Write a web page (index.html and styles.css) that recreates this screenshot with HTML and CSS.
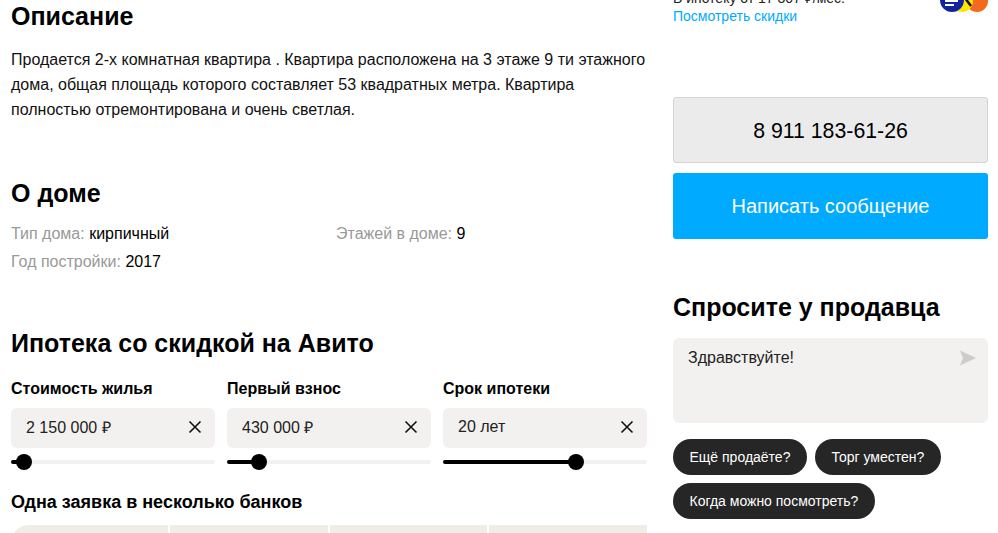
FILE: index.html
```html
<!DOCTYPE html>
<html lang="ru">
<head>
  <meta charset="UTF-8">
  <title>Квартира</title>
  <link rel="stylesheet" href="styles.css">
</head>
<body>
  <div class="page">
    <!-- Left column -->
    <div class="main">
      <h2 class="title-first">Описание</h2>
      <p class="descr">Продается 2-х комнатная квартира . Квартира расположена на 3 этаже 9 ти этажного дома, общая площадь которого составляет 53 квадратных метра. Квартира полностью отремонтирована и очень светлая.</p>

      <h2 class="title-house">О доме</h2>
      <ul class="params">
        <li><span>Тип дома:</span> кирпичный</li>
        <li><span>Этажей в доме:</span> 9</li>
        <li><span>Год постройки:</span> 2017</li>
      </ul>

      <h2 class="title-mortgage">Ипотека со скидкой на Авито</h2>
      <div class="calc">
        <div class="field">
          <label>Стоимость жилья</label>
          <div class="input"><span>2 150 000 ₽</span>
            <svg class="clear" width="14" height="14" viewBox="0 0 14 14"><path d="M1.5 1.5l11 11M12.5 1.5l-11 11"/></svg>
          </div>
          <div class="track"><div class="fill" style="width: 13px"></div><div class="knob"></div></div>
        </div>
        <div class="field">
          <label>Первый взнос</label>
          <div class="input"><span>430 000 ₽</span>
            <svg class="clear" width="14" height="14" viewBox="0 0 14 14"><path d="M1.5 1.5l11 11M12.5 1.5l-11 11"/></svg>
          </div>
          <div class="track"><div class="fill" style="width: 32px"></div><div class="knob"></div></div>
        </div>
        <div class="field">
          <label>Срок ипотеки</label>
          <div class="input"><span>20 лет</span>
            <svg class="clear" width="14" height="14" viewBox="0 0 14 14"><path d="M1.5 1.5l11 11M12.5 1.5l-11 11"/></svg>
          </div>
          <div class="track"><div class="fill" style="width: 133px"></div><div class="knob"></div></div>
        </div>
      </div>

      <h3 class="banks-title">Одна заявка в несколько банков</h3>
      <div class="banks">
        <div class="bank"></div>
        <div class="bank"></div>
        <div class="bank"></div>
        <div class="bank"></div>
      </div>
    </div>

    <!-- Right column -->
    <div class="side">
      <div class="promo">
        <div class="promo-text">
          <div>В ипотеку от 17 307 ₽/мес.</div>
          <a href="#">Посмотреть скидки</a>
        </div>
        <svg class="promo-logo" width="48" height="26" viewBox="0 0 48 26">
          <circle cx="37" cy="13" r="11" fill="#f26a1b"/>
          <circle cx="22" cy="13" r="11" fill="#ffe600"/>
          <path d="M25 10l6 8" stroke="#111" stroke-width="2.5"/>
          <circle cx="12" cy="12" r="12" fill="#12239e"/>
          <path d="M5 9h13M5 13h13M5 17h9" stroke="#fff" stroke-width="2"/>
        </svg>
      </div>
      <a class="btn btn-phone" href="#">8 911 183-61-26</a>
      <a class="btn btn-write" href="#">Написать сообщение</a>

      <h2 class="title-ask">Спросите у продавца</h2>
      <div class="msg">
        <span>Здравствуйте!</span>
        <svg class="send" width="16" height="16" viewBox="0 0 16 15"><path d="M0 0l16 7.5L0 15l3-7.5z"/></svg>
      </div>
      <div class="chips">
        <a class="chip" href="#">Ещё продаёте?</a>
        <a class="chip" href="#">Торг уместен?</a>
        <a class="chip" href="#">Когда можно посмотреть?</a>
      </div>
    </div>
  </div>
</body>
</html>
```

FILE: styles.css
```css
html, body { margin: 0; padding: 0; height: 533px; overflow: hidden; background: #fff; }
body { font-family: "Liberation Sans", Arial, sans-serif; color: #000; font-size: 16px; }
a { text-decoration: none; }
h2, h3, p, ul { margin: 0; padding: 0; }

.page { display: flex; gap: 26px; height: 542px; padding-left: 11px; margin-top: -9px; overflow: hidden; }
.main { width: 636px; }
.side { width: 315px; }

h2 { font-size: 25px; line-height: 32px; font-weight: 700; }
.title-first { margin-top: 9px; }
.descr { margin-top: 15px; line-height: 25px; width: 640px; color: #111; }
.title-house { margin-top: 55px; }
.title-mortgage { margin-top: 55px; }

.params { list-style: none; display: grid; grid-template-columns: 325px 1fr; row-gap: 8px; margin-top: 15px; line-height: 20px; }
.params span { color: #999; }

.calc { display: flex; gap: 12px; margin-top: 20px; }
.field { width: 204px; }
.field label { display: block; font-weight: 700; line-height: 20px; }
.input { display: flex; justify-content: space-between; align-items: center; box-sizing: border-box; height: 40px; margin-top: 9px; padding: 0 13px 2px 15px; background: #f2f1ef; border-radius: 6px; color: #222; }
.clear { fill: none; stroke: #111; stroke-width: 1.6; }
.track { position: relative; height: 4px; margin-top: 12px; background: #f2f1ef; border-radius: 2px; }
.fill { height: 4px; background: #000; border-radius: 2px; }
.knob { position: absolute; top: -6px; width: 16px; height: 16px; margin-left: -8px; background: #000; border-radius: 50%; }
.field:nth-child(1) .knob { left: 13px; }
.field:nth-child(2) .knob { left: 32px; }
.field:nth-child(3) .knob { left: 133px; }

.banks-title { margin-top: 28px; font-size: 18px; line-height: 20px; }
.banks { display: grid; grid-template-columns: 157px 158px 157px 158px; gap: 2px; margin-top: 13px; }
.bank { height: 60px; background: #f0ede7; }
.bank:first-child { border-radius: 18px 0 0 0; }

.promo { display: flex; justify-content: space-between; height: 106px; font-size: 14px; line-height: 18px; color: #222; }
.promo a { color: #00aaff; }
.promo-text { margin-top: -2px; }
.promo-logo { margin-top: -3px; }

.btn { display: flex; align-items: center; justify-content: center; box-sizing: border-box; height: 66px; border-radius: 3px; }
.btn-phone { background: #ebebeb; border: 1px solid #d4d4d4; color: #000; font-size: 21.3px; padding-top: 3px; }
.btn-write { margin-top: 10px; background: #00aaff; color: #fff; font-size: 20px; }

.title-ask { margin-top: 52px; }
.msg { display: flex; justify-content: space-between; align-items: flex-start; box-sizing: border-box; height: 85px; margin-top: 15px; padding: 10px 12px 0 15px; background: #f2f1ef; border-radius: 6px; line-height: 20px; color: #222; }
.send { fill: #ccc; margin-top: 2px; }

.chips { display: flex; flex-wrap: wrap; gap: 8px; margin-top: 16px; }
.chip { display: flex; align-items: center; height: 36px; padding: 0 16.5px; background: #262626; color: #fff; border-radius: 18px; font-size: 14px; }
```
